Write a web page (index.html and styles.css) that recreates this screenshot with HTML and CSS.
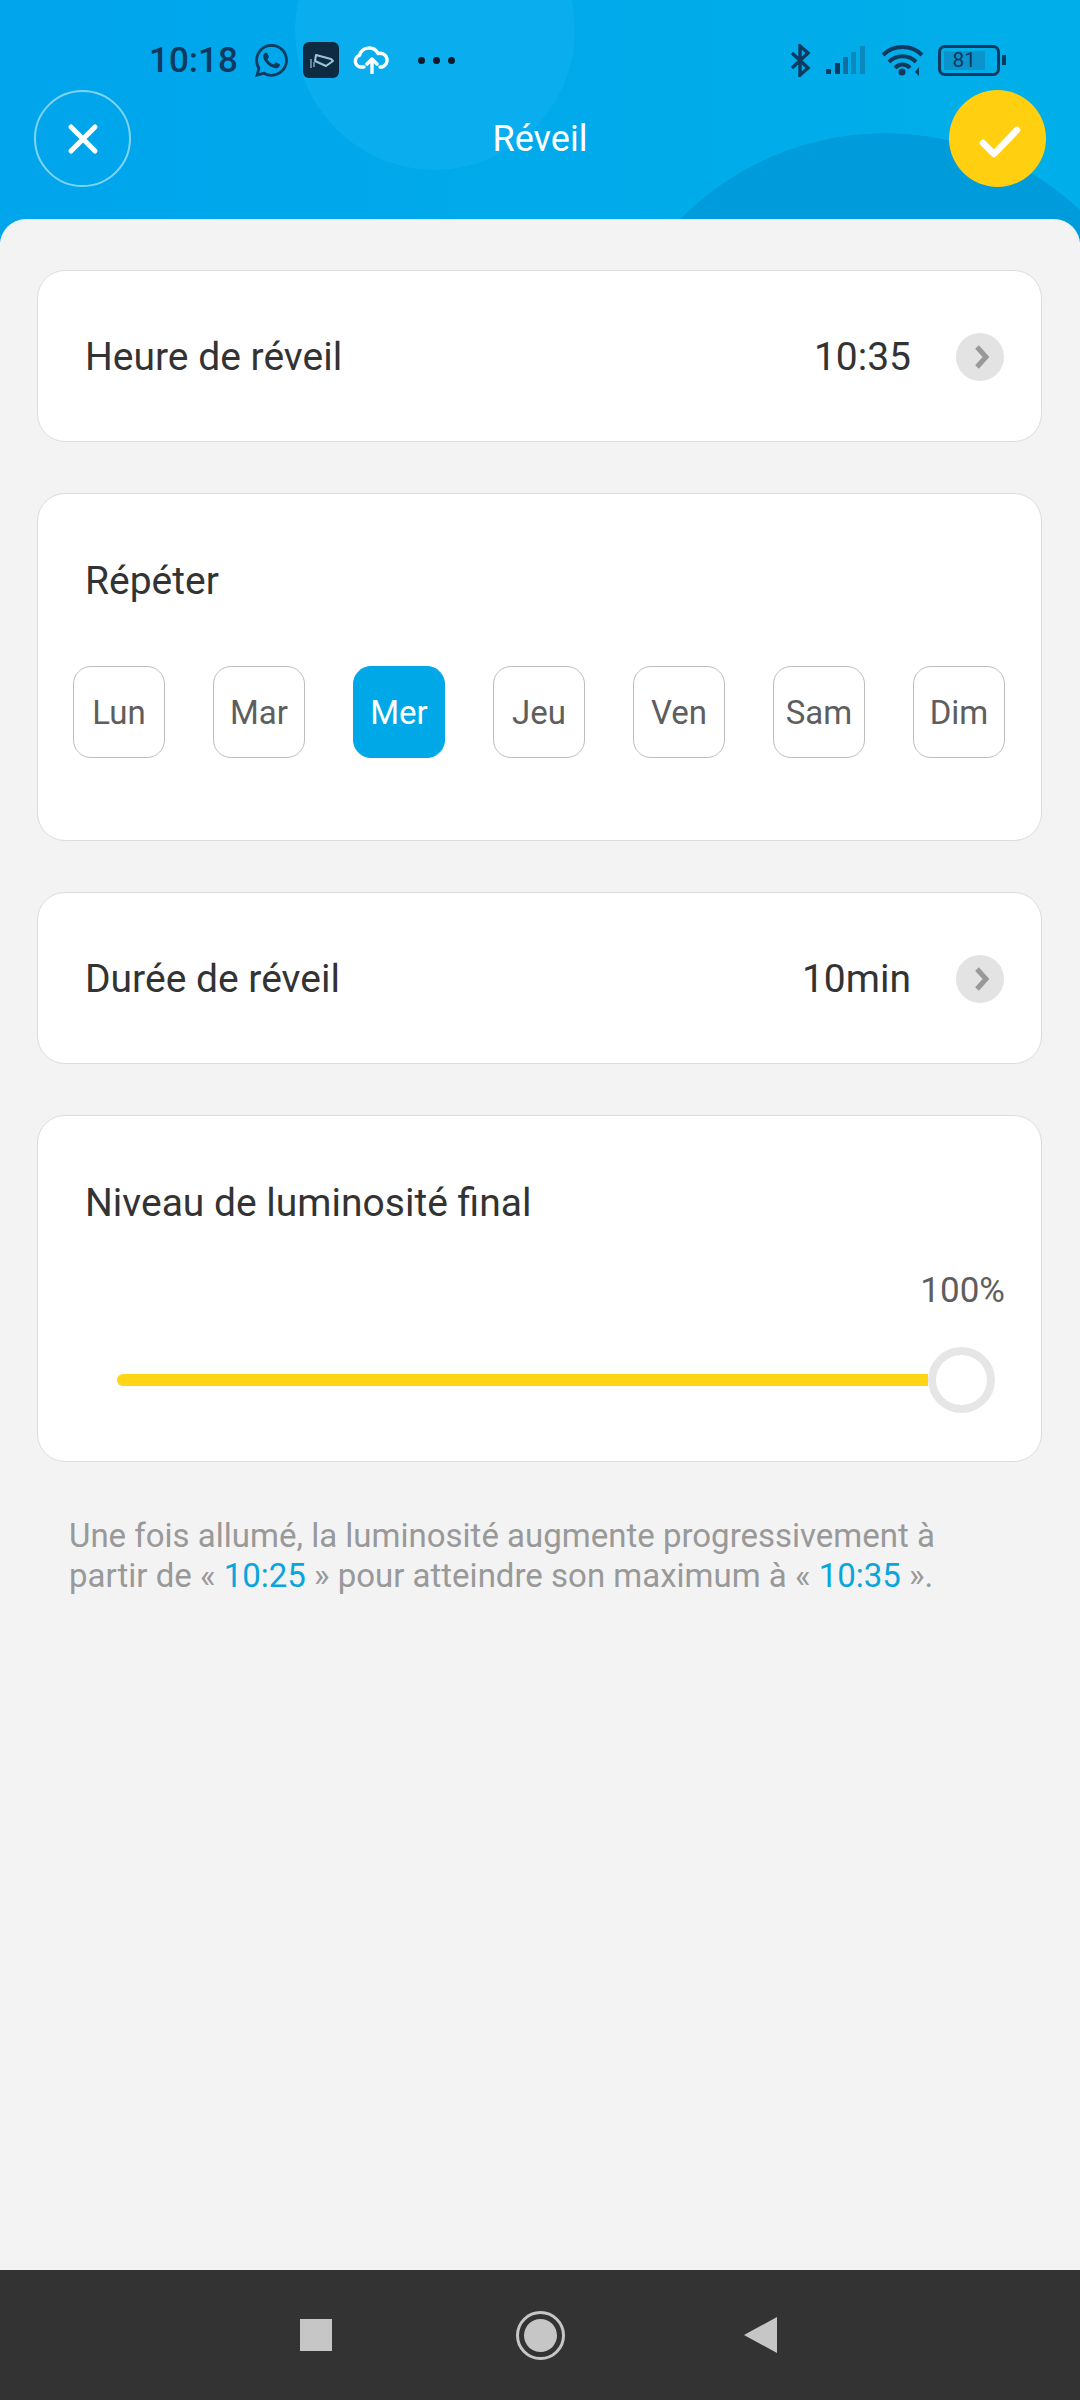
FILE: index.html
```html
<!DOCTYPE html>
<html lang="fr">
<head>
    <title>Réveil</title>
    <meta charset="UTF-8">
    <meta name="viewport" content="width=device-width, initial-scale=1.0">
    <link rel="stylesheet" href="styles.css">
</head>

<body>
    <header class="top">
        <div class="status">
            <span class="clock">10:18</span>
            <svg class="ic-whatsapp" viewBox="2 2 20 20"><path fill="#0d3a5e" d="M12.04 2c-5.46 0-9.91 4.45-9.91 9.91 0 1.75.46 3.45 1.32 4.95L2.05 22l5.25-1.38c1.45.79 3.08 1.21 4.74 1.21 5.46 0 9.91-4.45 9.91-9.91 0-2.65-1.03-5.14-2.9-7.01A9.816 9.816 0 0 0 12.04 2m.01 1.67c2.2 0 4.26.86 5.82 2.42a8.225 8.225 0 0 1 2.41 5.83c0 4.54-3.7 8.23-8.24 8.23-1.48 0-2.93-.39-4.19-1.15l-.3-.17-3.12.82.83-3.04-.2-.32a8.188 8.188 0 0 1-1.26-4.38c.01-4.54 3.7-8.24 8.25-8.24M8.53 7.33c-.16 0-.43.06-.66.31-.22.25-.87.86-.87 2.07 0 1.22.89 2.39 1 2.56.14.17 1.76 2.67 4.25 3.73.59.27 1.05.42 1.41.53.59.19 1.13.16 1.56.1.48-.07 1.46-.6 1.67-1.18.21-.58.21-1.07.15-1.18-.07-.1-.23-.16-.48-.27-.25-.14-1.47-.74-1.69-.82-.23-.08-.37-.12-.56.12-.16.25-.64.81-.78.97-.15.17-.29.19-.53.07-.26-.13-1.06-.39-2-1.23-.74-.66-1.23-1.47-1.38-1.72-.12-.24-.01-.39.11-.5.11-.11.27-.29.37-.44.13-.14.17-.25.25-.41.08-.17.04-.31-.02-.43-.06-.11-.56-1.35-.77-1.84-.2-.48-.4-.42-.56-.43-.14 0-.3-.01-.47-.01z"/></svg>
            <svg class="ic-camera" viewBox="0 0 36 36">
                <rect width="36" height="36" rx="6" fill="#0e2b42"/>
                <path fill="none" stroke="#9fc4da" stroke-width="2" stroke-linejoin="round" d="M13 13l15 4 2 2-7 5-11-5z"/>
                <path fill="none" stroke="#9fc4da" stroke-width="1.2" d="M8 17v9M11 20v5"/>
            </svg>
            <svg class="ic-cloud" viewBox="0 0 38 28"><path fill="none" stroke="#fff" stroke-width="3.4" stroke-linecap="round" stroke-linejoin="round" d="M11 21H8a6 6 0 0 1-1.500-11.700A10 10 0 0 1 25 7.500a7 7 0 0 1 4 13.500h-2M19 27V13M14 18l5-5 5 5"/></svg>
            <span class="dots"><i></i><i></i><i></i></span>
            <span class="status-gap"></span>
            <svg class="ic-bt" viewBox="0 0 21 33"><path fill="none" stroke="#0d3a5e" stroke-width="3.4" d="M2 9l16 15-8 7V2l8 7L2 24"/></svg>
            <svg class="ic-signal" viewBox="0 0 39 28">
                <rect x="0" y="23" width="5" height="5" fill="#0d3a5e"/>
                <rect x="9" y="17" width="5" height="11" fill="#0d3a5e"/>
                <rect x="17" y="11" width="5" height="17" fill="#0d6f9f"/>
                <rect x="25" y="6" width="5" height="22" fill="#0b88bd"/>
                <rect x="34" y="0" width="5" height="28" fill="#0b88bd"/>
            </svg>
            <svg class="ic-wifi" viewBox="0 0 43 31">
                <path fill="none" stroke="#0d3a5e" stroke-width="4" d="M2 10a28 28 0 0 1 39 0M8 17a19 19 0 0 1 27 0M14 23a10 10 0 0 1 15 0"/>
                <circle cx="21" cy="27" r="3.500" fill="#0d3a5e"/>
                <path fill="#0d3a5e" d="M38 22v9l-4-4z"/>
            </svg>
            <span class="battery"><span class="battery-level">81</span></span>
            <span class="battery-nub"></span>
        </div>

        <div class="toolbar">
            <button class="round round-close">
                <svg viewBox="0 0 32 32"><path fill="none" stroke="#fff" stroke-width="5" stroke-linecap="round" d="M4 4l24 24M28 4L4 28"/></svg>
            </button>
            <h1>Réveil</h1>
            <button class="round round-ok">
                <svg viewBox="0 0 44 34"><path fill="none" stroke="#fff" stroke-width="6.500" stroke-linecap="round" stroke-linejoin="round" d="M5 18l11 11L39 5"/></svg>
            </button>
        </div>
    </header>

    <main class="sheet">
        <section class="card card-row">
            <span class="label">Heure de réveil</span>
            <span class="value">10:35</span>
            <span class="chevron"><svg viewBox="0 0 16 24"><path fill="none" stroke="#999" stroke-width="5" d="M3 2l9 10-9 10"/></svg></span>
        </section>

        <section class="card card-days">
            <div class="label">Répéter</div>
            <div class="days">
                <span class="day">Lun</span>
                <span class="day">Mar</span>
                <span class="day day-on">Mer</span>
                <span class="day">Jeu</span>
                <span class="day">Ven</span>
                <span class="day">Sam</span>
                <span class="day">Dim</span>
            </div>
        </section>

        <section class="card card-row">
            <span class="label">Durée de réveil</span>
            <span class="value">10min</span>
            <span class="chevron"><svg viewBox="0 0 16 24"><path fill="none" stroke="#999" stroke-width="5" d="M3 2l9 10-9 10"/></svg></span>
        </section>

        <section class="card card-level">
            <div class="label">Niveau de luminosité final</div>
            <div class="percent">100%</div>
            <div class="slider">
                <span class="slider-bar"></span>
                <span class="slider-thumb"></span>
            </div>
        </section>

        <p class="note">Une fois allumé, la luminosité augmente progressivement à<br>partir de « <span class="time">10:25</span> » pour atteindre son maximum à « <span class="time">10:35</span> ».</p>
    </main>

    <nav class="navbar">
        <span class="nav-square"></span>
        <span class="nav-home"><i></i></span>
        <svg class="nav-back" viewBox="0 0 33 36"><path fill="#c6c6c6" d="M33 0v36L0 18z"/></svg>
    </nav>
</body>
</html>
```

FILE: styles.css
```css
html, body {
    margin: 0;
    height: 2400px;
}

body {
    display: flex;
    flex-direction: column;
    font-family: Roboto, "Liberation Sans", sans-serif;
    background-color: #f3f3f3;
    overflow: hidden;
}

/* header: the two big circles are part of the background picture */
.top {
    box-sizing: border-box;
    height: 242px;
    flex: none;
    background:
        radial-gradient(circle 140px at 435px 30px, #0aaeee 99.6%, transparent 100%),
        radial-gradient(circle 287px at 885px 420px, #009bdb 99.8%, transparent 100%),
        linear-gradient(90deg, #00a5ec, #00afe9);
}

.status {
    display: flex;
    align-items: center;
    height: 36px;
    padding: 42px 0 0 149px;
}

.clock {
    width: 106px;
    font-size: 35px;
    font-weight: 500;
    color: #0d3a5e;
}

.ic-whatsapp { width: 33px; height: 33px; }
.ic-camera { width: 36px; height: 36px; margin-left: 15px; }
.ic-cloud { width: 38px; height: 28px; margin-left: 14px; }

.dots {
    display: flex;
    gap: 8px;
    margin-left: 27px;
}

.dots i {
    width: 7px;
    height: 7px;
    border-radius: 50%;
    background-color: #0a1c2e;
}

.status-gap { width: 335px; }

.ic-bt { width: 21px; height: 33px; }
.ic-signal { width: 39px; height: 28px; margin-left: 15px; }
.ic-wifi { width: 43px; height: 31px; margin-left: 16px; }

.battery {
    box-sizing: border-box;
    display: flex;
    width: 62px;
    height: 31px;
    margin-left: 14px;
    padding: 3px;
    border: 3px solid #0d3a5e;
    border-radius: 7px;
}

.battery-level {
    width: 81%;
    font-size: 21px;
    line-height: 19px;
    text-align: center;
    color: #0d3a5e;
    background-color: #0b93cc;
}

.battery-nub {
    width: 4px;
    height: 10px;
    margin-left: 2px;
    background-color: #0d3a5e;
}

.toolbar {
    display: flex;
    align-items: center;
    justify-content: space-between;
    height: 97px;
    margin-top: 12px;
    padding: 0 34px;
}

h1 {
    margin: 0;
    font-size: 36px;
    font-weight: 400;
    color: #fff;
}

.round {
    box-sizing: border-box;
    display: flex;
    align-items: center;
    justify-content: center;
    width: 97px;
    height: 97px;
    padding: 0;
    border: none;
    border-radius: 50%;
    background: none;
}

.round-close { border: 2px solid #7fd4f5; }
.round-close svg { width: 32px; height: 32px; }
.round-ok { padding: 6px 0 0 5px; background-color: #ffcf10; }
.round-ok svg { width: 44px; height: 34px; }

/* content */
.sheet {
    flex: 1;
    box-sizing: border-box;
    margin-top: -23px;
    padding: 50px 38px 0 37px;
    background-color: #f3f3f3;
    border-top: 1px solid #e3f4fb;
    border-radius: 26px 26px 0 0;
}

.card {
    box-sizing: border-box;
    margin-bottom: 51px;
    background-color: #fff;
    border: 1px solid #dcdcdc;
    border-radius: 28px;
}

.card-row {
    display: flex;
    align-items: center;
    height: 172px;
    padding: 2px 37px 0 47px;
}

.label {
    font-size: 39px;
    line-height: 44px;
    color: #333;
}

.value {
    margin-left: auto;
    font-size: 39px;
    color: #333;
}

.chevron {
    display: flex;
    align-items: center;
    justify-content: center;
    width: 48px;
    height: 48px;
    margin-left: 45px;
    border-radius: 50%;
    background-color: #e3e3e3;
}

.chevron svg { width: 16px; height: 24px; margin-left: 3px; }

.card-days {
    height: 348px;
    padding: 65px 36px 0 35px;
}

.card-days .label { padding-left: 12px; }

.days {
    display: flex;
    justify-content: space-between;
    margin-top: 63px;
}

.day {
    box-sizing: border-box;
    display: flex;
    align-items: center;
    justify-content: center;
    width: 92px;
    height: 92px;
    border: 1px solid #bdbdbd;
    border-radius: 18px;
    font-size: 33px;
    color: #5e5e5e;
}

.day-on {
    border-color: #00a8e8;
    background-color: #00a8e8;
    color: #fff;
}

.card-level {
    height: 347px;
    padding: 65px 36px 0 47px;
}

.percent {
    margin-top: 46px;
    font-size: 35px;
    line-height: 40px;
    text-align: right;
    color: #5e5e5e;
}

.slider {
    display: flex;
    align-items: center;
    margin: 36px 10px 0 32px;
}

.slider-bar {
    flex: 1;
    height: 12px;
    border-radius: 6px 0 0 6px;
    background-color: #ffd518;
}

.slider-thumb {
    box-sizing: border-box;
    width: 67px;
    height: 66px;
    border: 8px solid #e6e6e6;
    border-radius: 50%;
    background-color: #fff;
}

.note {
    margin: 54px 0 0 32px;
    font-size: 33px;
    line-height: 40px;
    color: #999;
}

.time { color: #0aa5dc; }

/* android buttons */
.navbar {
    display: flex;
    align-items: center;
    flex: none;
    height: 130px;
    padding-left: 300px;
    background-color: #333;
}

.nav-square {
    width: 32px;
    height: 32px;
    background-color: #c6c6c6;
}

.nav-home {
    box-sizing: border-box;
    display: flex;
    align-items: center;
    justify-content: center;
    width: 49px;
    height: 49px;
    margin-left: 184px;
    border: 3px solid #c6c6c6;
    border-radius: 50%;
}

.nav-home i {
    width: 33px;
    height: 33px;
    border-radius: 50%;
    background-color: #c6c6c6;
}

.nav-back {
    width: 33px;
    height: 36px;
    margin-left: 179px;
}
```
